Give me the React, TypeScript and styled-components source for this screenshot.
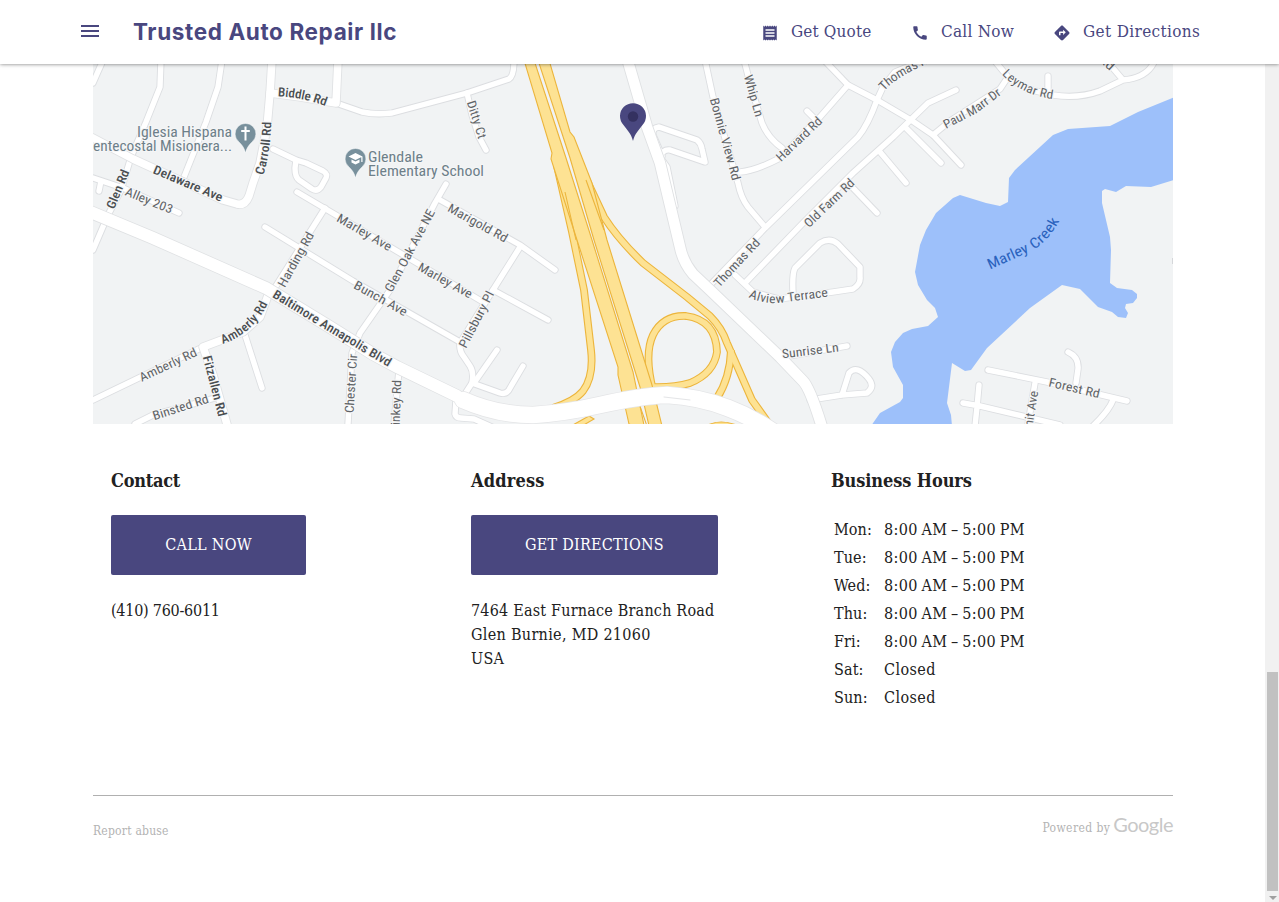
import React from "react";
import styled, { createGlobalStyle } from "styled-components";
import { MdMenu, MdReceipt, MdCall, MdDirections } from "react-icons/md";

const ACCENT = "#49477f";
const SERIF = `"DejaVu Serif Condensed", "DejaVu Serif", "Liberation Serif", serif`;

const GlobalStyle = createGlobalStyle`
  * { box-sizing: border-box; }
  html, body { margin: 0; height: 100%; overflow: hidden; background: #fff; }
  body { font-family: ${SERIF}; font-stretch: condensed; color: #212121; }
`;

const Page = styled.div`
  height: 902px;
  display: flex;
  flex-direction: column;
`;

const Header = styled.header`
  position: relative;
  z-index: 2;
  flex: none;
  height: 64px;
  padding: 0 79px 0 78px;
  display: flex;
  align-items: center;
  justify-content: space-between;
  background: #fff;
  color: ${ACCENT};
  box-shadow: 0 0 4px rgba(0, 0, 0, 0.55);
`;

const Brand = styled.div`
  display: flex;
  align-items: center;
  gap: 31px;
  svg { display: block; margin-bottom: 2px; }
`;

const Title = styled.h1`
  margin: 0;
  font: 700 22.5px/32px Inter, sans-serif;
  letter-spacing: 0.62px;
  white-space: nowrap;
`;

const Nav = styled.nav`
  display: flex;
  align-items: center;
  padding-bottom: 3px;
`;

const NavLink = styled.a<{ $width: number; $track: number }>`
  display: flex;
  align-items: center;
  gap: 12px;
  width: ${(p) => p.$width}px;
  font-size: 17px;
  line-height: 24px;
  letter-spacing: ${(p) => p.$track}px;
  white-space: nowrap;
  svg { flex: none; margin-top: 4px; }
`;

const Body = styled.div`
  flex: 1;
  min-height: 0;
  display: flex;
`;

const Main = styled.main`
  flex: 1;
  padding: 0 92px 0 93px;
`;

const MapSvg = styled.svg`
  display: block;
  width: 1080px;
  height: 360px;
  background: #f1f3f4;
  font-family: Roboto, sans-serif;
`;

const Columns = styled.section`
  display: grid;
  grid-template-columns: repeat(3, 360px);
  height: 371px;
  padding-top: 43px;
`;

const Column = styled.div`
  padding: 0 18px;
`;

const Heading = styled.h2<{ $track: number }>`
  margin: 0 0 20px;
  font-size: 18px;
  line-height: 28px;
  letter-spacing: ${(p) => p.$track}px;
  white-space: nowrap;
`;

const Button = styled.button<{ $width: number; $track: number }>`
  display: block;
  width: ${(p) => p.$width}px;
  height: 60px;
  margin: 0 0 24px;
  padding: 0 0 2px;
  border: 0;
  border-radius: 2px;
  background: ${ACCENT};
  color: #fff;
  font: 16px ${SERIF};
  font-stretch: condensed;
  letter-spacing: ${(p) => p.$track}px;
  white-space: nowrap;
`;

const Line = styled.div<{ $track: number }>`
  font-size: 16px;
  line-height: 24px;
  letter-spacing: ${(p) => p.$track}px;
  white-space: nowrap;
`;

const Hours = styled.dl`
  margin: 21px 0 0;
  padding-left: 3px;
  display: grid;
  grid-template-columns: 50px 1fr;
  grid-auto-rows: 28px;
  font-size: 16px;
  line-height: 28px;
  letter-spacing: 0.1px;
  white-space: nowrap;
  dd { margin: 0; }
`;

const Time = styled.dd<{ $open: boolean }>`
  letter-spacing: ${(p) => (p.$open ? 0.35 : 0.4)}px;
  word-spacing: ${(p) => (p.$open ? -1.2 : 0)}px;
`;

const Footer = styled.footer`
  display: flex;
  justify-content: space-between;
  border-top: 1px solid #b0b0b0;
  padding-top: 14px;
  color: #b3b3b3;
  font-size: 12px;
  line-height: 42px;
  letter-spacing: 0.22px;
`;

const Powered = styled.div`
  display: flex;
  align-items: baseline;
  gap: 3px;
  line-height: 28px;
  letter-spacing: 0.4px;
`;

const Wordmark = styled.span`
  font: 20px/28px Lato, sans-serif;
  color: #c8c8c8;
  letter-spacing: -0.5px;
`;

const Track = styled.div`
  width: 14px;
  background: #f1f1f1;
  display: flex;
  flex-direction: column;
  justify-content: flex-end;
  align-items: center;
`;

const Thumb = styled.div`
  width: 11px;
  height: 219px;
  margin-left: 1px;
  background: #c1c1c1;
`;

const ArrowDown = styled.div`
  margin: 5px 0 2px 1px;
  border: 4px solid transparent;
  border-top-color: #a0a0a0;
  border-bottom: 0;
`;

const smallRoads = [
  "M104 58L93 83",
  "M161 60L160 87L146 122L131 157L121 190L108 215L93 250",
  "M222 60L218 87L206 122L184 177",
  "M336 103L362 112Q376 115 392 113L467 93L509 79Q514 76 514 60",
  "M467 93L472 115L479 137L486 150",
  "M273 149L296 160L306 163L323 171Q328 174 326 178L321 187Q317 192 312 189L299 180Q295 177 295 168L296 160",
  "M297 192L483 302",
  "M325 208L276 286",
  "M203 347L93 400",
  "M265 227L353 281L460 342",
  "M520 247L493 290L460 343Q459 351 464 357L470 366Q474 372 472 383L463 397",
  "M474 383L497 350",
  "M472 383L500 393Q507 395 510 388L523 366",
  "M440 200L520 245L555 270M493 290L548 320",
  "M446 184L435 203L390 290L360 333L352 353L348 424",
  "M399 370L394 424",
  "M456 400L455 414Q456 418 461 418L474 419L492 427",
  "M245 335L262 388",
  "M135 424L153 415L215 398",
  "M93 178L123 188L179 213M101 181L99 191",
  "M662 156L653 135Q652 128 659 127L697 140Q701 143 702 149L705 162L670 150Q663 149 660 157L667 167L675 206",
  "M705 60L713 97L738 183Q741 198 748 207L765 227",
  "M744 60L750 83L762 123Q768 138 782 148",
  "M740 172Q755 171 780 158L820 117L848 85M807 111L818 122",
  "M824 60L848 85L877 100L911 120L933 135L961 165",
  "M930 58L895 72L883 87L877 100Q868 125 858 137L765 228L712 283",
  "M956 90L928 103L893 137L853 173L803 223L745 283",
  "M880 152L906 183M905 127L941 163M852 187L877 213",
  "M735 275L753 292L779 299L833 292L853 289Q861 284 860 277L860 267L838 244Q830 237 820 243L795 268Q792 274 793 293",
  "M933 135L950 121L1000 89L1006 80",
  "M994 60L1008 77L1027 89L1053 95Q1078 99 1100 91L1123 80Q1148 78 1155 60M1048 76L1048 93M1106 60L1123 80",
  "M778 358L847 346",
  "M810 400L842 395L867 393Q875 387 869 379Q857 364 849 373L842 395",
  "M988 370L1047 382L1127 401M1068 352Q1079 357 1078 369L1076 383",
  "M963 403L980 406L1060 425M979 385L977 407L975 426M1035 383L1028 424M1113 400Q1109 411 1092 427",
];

const midRoads = [
  "M272 60L270 93L267 127L260 163L253 183L249 196Q245 206 237 204L223 200L133 159L93 138",
  "M338 60L336 103M270 93L300 97L336 103",
  "M270 290L260 317L243 332L203 347L213 375L228 428",
];

const mainRoads = ["M627 58L647 127L660 163L680 247Q683 262 693 274L710 290L780 357L803 381Q810 388 822 427"];

const boulevard = "M88 211L153 238L266 288L330 327L373 354L397 367L457 396";
const bridge = "M463 400Q497 415 533 415Q565 413 600 405Q640 396 667 395Q700 397 728 408Q752 417 775 433";

const ramps = [
  "M557 166L572 232L584 290L591 350Q594 376 583 391Q575 401 553 408",
  "M582 170L604 217Q618 239 643 263L687 297L710 316Q722 328 727 343L752 400L772 428",
  "M653 390Q644 354 653 335Q663 315 686 316Q716 320 717 352Q714 373 690 383Q673 388 650 387",
  "M731 350Q730 378 717 398",
];

const water =
  "M1180 95L1138 112L1110 126L1068 129L1053 135L1015 170L1009 178L1008 202L1000 206L986 203L960 195L953 198L936 213L926 230L920 245L915 272L918 285L927 300L935 308L938 317L928 326L912 329L903 333L895 342L891 352L893 367L903 385L903 398L900 402L880 413L871 426L952 426L951 415L947 403L952 363L965 371L971 370L987 348L1030 308L1062 285L1080 289L1098 307L1112 312L1118 317L1126 318L1128 313L1125 308L1126 304L1133 303L1137 298L1137 294L1132 290L1117 288L1110 283L1111 250L1110 237L1102 203L1102 191L1105 189L1116 192L1126 186L1151 187L1180 178Z";

type Label = { t: string; d: string; len: number; dark?: boolean };
const labels: Label[] = [
  { t: "Biddle Rd", d: "M278 92Q304 93 327 102", len: 51, dark: true },
  { t: "Carroll Rd", d: "M259 174Q266 153 267 121", len: 54, dark: true },
  { t: "Delaware Ave", d: "M154 169L223 198", len: 75, dark: true },
  { t: "Glen Rd", d: "M110 208L126 169", len: 42, dark: true },
  { t: "Alley 203", d: "M126 191L173 210", len: 51 },
  { t: "Harding Rd", d: "M281 286L311 232", len: 62 },
  { t: "Marley Ave", d: "M338 217L392 248", len: 62 },
  { t: "Bunch Ave", d: "M355 284L407 313", len: 60 },
  { t: "Glen Oak Ave NE", d: "M388 291L432 209", len: 93 },
  { t: "Marley Ave", d: "M419 266L472 295", len: 61 },
  { t: "Marigold Rd", d: "M449 207L507 239", len: 67 },
  { t: "Pillsbury Pl", d: "M462 347L491 291", len: 63 },
  { t: "Baltimore Annapolis Blvd", d: "M274 293L333 329L392 364", len: 137, dark: true },
  { t: "Amberly Rd", d: "M221 340Q252 329 265 299", len: 60, dark: true },
  { t: "Amberly Rd", d: "M140 378L197 351", len: 63 },
  { t: "Fitzallen Rd", d: "M207 356L223 417", len: 63, dark: true },
  { t: "Binsted Rd", d: "M153 416L209 398", len: 59 },
  { t: "Chester Cir", d: "M349 413L353 353", len: 60 },
  { t: "Pinkey Rd", d: "M395 433L397 379", len: 54 },
  { t: "Ditty Ct", d: "M471 101L483 139", len: 40 },
  { t: "Bonnie View Rd", d: "M714 98L737 181", len: 86 },
  { t: "Whip Ln", d: "M748 75L760 117", len: 44 },
  { t: "Harvard Rd", d: "M778 159L821 118", len: 59 },
  { t: "Old Farm Rd", d: "M806 225L853 180", len: 65 },
  { t: "Thomas Rd", d: "M716 285L758 240", len: 62 },
  { t: "Thomas Rd", d: "M881 88Q893 73 934 56", len: 62 },
  { t: "Paul Marr Dr", d: "M944 125L975 109L1000 90", len: 66 },
  { t: "Leymar Rd", d: "M1005 71Q1023 91 1055 95", len: 56 },
  { t: "Bayview Rd", d: "M1064 22L1114 69", len: 68 },
  { t: "Alview Terrace", d: "M750 293Q768 302 790 297L829 292", len: 80 },
  { t: "Sunrise Ln", d: "M782 354L839 347", len: 58 },
  { t: "Forest Rd", d: "M1049 382L1100 394", len: 53 },
  { t: "Summit Ave", d: "M1024 453L1034 390", len: 64 },
];

function Roads({ paths, width, edge }: { paths: string[]; width: number; edge: string }) {
  return (
    <g fill="none" strokeLinecap="round" strokeLinejoin="round">
      {paths.map((d, i) => (
        <path key={i} d={d} stroke={edge} strokeWidth={width + 1.8} />
      ))}
      {paths.map((d, i) => (
        <path key={i} d={d} stroke="#fff" strokeWidth={width} />
      ))}
    </g>
  );
}

function PlacePin({ x, y, children }: { x: number; y: number; children: React.ReactNode }) {
  return (
    <g transform={`translate(${x} ${y})`}>
      <path
        d="M0 19.5C-1.2 14 -4 11 -7 8A10.4 10.4 0 1 1 7 8C4 11 1.2 14 0 19.5Z"
        fill="#78909c"
        stroke="#fff"
        strokeWidth="0.5"
      />
      {children}
    </g>
  );
}

function StreetMap() {
  return (
    <MapSvg viewBox="93 64 1080 360">
      <path d={water} fill="#9dc0fa" />
      <Roads paths={smallRoads} width={5.4} edge="#dcdee1" />
      <Roads paths={midRoads} width={7.5} edge="#e0e2e4" />
      <Roads paths={mainRoads} width={10.5} edge="#dfe1e3" />
      <g fill="none" strokeLinejoin="round">
        {ramps.map((d, i) => (
          <path key={i} d={d} stroke="#ecb53c" strokeWidth="7.8" />
        ))}
        {ramps.map((d, i) => (
          <path key={i} d={d} stroke="#fde293" strokeWidth="5.6" />
        ))}
      </g>
      <g fill="#fde293" stroke="#ecb53c" strokeWidth="1.1">
        <path d="M524 60L552 153L551 159L577 240L618 367L618 375L629 424L645 430L633 372L592 240L566 158L534 60Z" />
        <path d="M538 60L570 158L594 240L640 387L650 430L662 426L652 385L607 240L592 183L574 137L570 132L549 60Z" />
        <path d="M706 426Q720 418 739 426ZM571 426L589 416L594 419L582 426Z" />
        <path d="M565 192L576 240M586 180L604 230M636 395L647 426" fill="none" />
      </g>
      <g fill="none" strokeLinecap="round">
        <path d={boulevard} stroke="#dfe1e3" strokeWidth="13.5" />
        <path d={bridge} stroke="#e4e5e7" strokeWidth="18" />
        <path d={boulevard} stroke="#fff" strokeWidth="12" />
        <path d={bridge} stroke="#fff" strokeWidth="16.5" />
        <path d="M664 397L690 400" stroke="#e4e5e7" strokeWidth="1" />
      </g>
      {labels.map((l, i) => (
        <g key={i}>
          <path id={`road-${i}`} d={l.d} fill="none" />
          <text
            dy="4.4"
            fontSize="12.500"
            fontWeight={l.dark ? 500 : 400}
            fill={l.dark ? "#4a4e51" : "#606366"}
            stroke="#f5f6f7"
            strokeWidth="2.2"
            strokeLinejoin="round"
            paintOrder="stroke"
          >
            <textPath href={`#road-${i}`} textLength={l.len - 1} lengthAdjust="spacingAndGlyphs">
              {l.t}
            </textPath>
          </text>
        </g>
      ))}
      <path id="creek" d="M988 265L1030 246Q1047 236 1057 214" fill="none" />
      <text dy="5" fontSize="14.500" fill="#2a62bd">
        <textPath href="#creek" textLength="84" lengthAdjust="spacingAndGlyphs">
          Marley Creek
        </textPath>
      </text>
      <g fontSize="14.500" fill="#6d7f89" stroke="#f5f6f7" strokeWidth="2.2" paintOrder="stroke" strokeLinejoin="round">
        <text x="137" y="137" textLength="95" lengthAdjust="spacingAndGlyphs">Iglesia Hispana</text>
        <text x="93" y="151" textLength="139" lengthAdjust="spacingAndGlyphs">entecostal Misionera...</text>
        <text x="368" y="162" textLength="55" lengthAdjust="spacingAndGlyphs">Glendale</text>
        <text x="368" y="176" textLength="116" lengthAdjust="spacingAndGlyphs">Elementary School</text>
      </g>
      <PlacePin x={245.5} y={133.5}>
        <path d="M0 -7V7M-4.3 -2.5H4.3" stroke="#fff" strokeWidth="2" />
      </PlacePin>
      <PlacePin x={355.5} y={158.5}>
        <path d="M0 -5.500L7 -2L0 1.500L-7 -2ZM-4 1V4L0 6L4 4V1L0 3ZM5.800 -2H7V3.500H5.800Z" fill="#fff" />
      </PlacePin>
      <path d="M633 141C631 133 627 130 623.500 125A13 13 0 1 1 642.500 125C639 130 635 133 633 141Z" fill={ACCENT} />
      <circle cx="633" cy="116.500" r="5.200" fill="#343160" />
      <path d="M1172.500 258V264" stroke="#d5d7da" />
    </MapSvg>
  );
}

const week: [string, string][] = [
  ["Mon:", "8:00 AM – 5:00 PM"],
  ["Tue:", "8:00 AM – 5:00 PM"],
  ["Wed:", "8:00 AM – 5:00 PM"],
  ["Thu:", "8:00 AM – 5:00 PM"],
  ["Fri:", "8:00 AM – 5:00 PM"],
  ["Sat:", "Closed"],
  ["Sun:", "Closed"],
];

export default function App() {
  return (
    <Page>
      <GlobalStyle />
      <Header>
        <Brand>
          <MdMenu size={24} />
          <Title>Trusted Auto Repair llc</Title>
        </Brand>
        <Nav>
          <NavLink $width={150} $track={0.15}><MdReceipt size={18} />Get Quote</NavLink>
          <NavLink $width={142} $track={0.25}><MdCall size={18} />Call Now</NavLink>
          <NavLink $width={147} $track={0.35}><MdDirections size={18} />Get Directions</NavLink>
        </Nav>
      </Header>
      <Body>
        <Main>
          <StreetMap />
          <Columns>
            <Column>
              <Heading $track={-0.25}>Contact</Heading>
              <Button $width={195} $track={0.3}>CALL NOW</Button>
              <Line $track={-0.25}>(410) 760-6011</Line>
            </Column>
            <Column>
              <Heading $track={0.2}>Address</Heading>
              <Button $width={247} $track={0.25}>GET DIRECTIONS</Button>
              <Line $track={0.2}>7464 East Furnace Branch Road</Line>
              <Line $track={0.3}>Glen Burnie, MD 21060</Line>
              <Line $track={0.3}>USA</Line>
            </Column>
            <Column>
              <Heading $track={-0.1}>Business Hours</Heading>
              <Hours>
                {week.map(([day, time]) => (
                  <React.Fragment key={day}>
                    <dt>{day}</dt>
                    <Time $open={time !== "Closed"}>{time}</Time>
                  </React.Fragment>
                ))}
              </Hours>
            </Column>
          </Columns>
          <Footer>
            <span>Report abuse</span>
            <Powered>
              Powered by <Wordmark>Google</Wordmark>
            </Powered>
          </Footer>
        </Main>
        <Track>
          <Thumb />
          <ArrowDown />
        </Track>
      </Body>
    </Page>
  );
}
